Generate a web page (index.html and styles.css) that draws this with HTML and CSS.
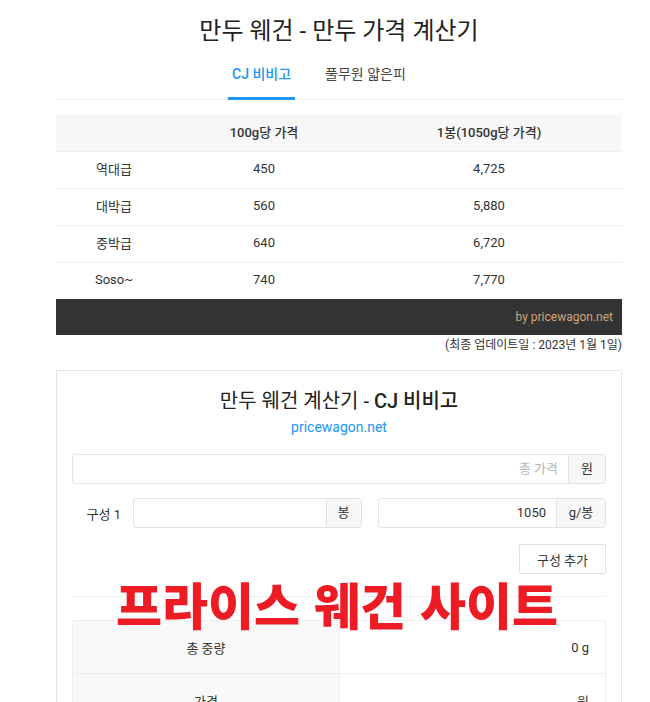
FILE: index.html
```html
<!DOCTYPE html>
<html lang="ko">
<head>
<meta charset="utf-8">
<title>만두 웨건 - 만두 가격 계산기</title>
<link rel="stylesheet" href="styles.css">
</head>
<body>
<div class="page">
  <h1 class="title">만두 웨건 - 만두 가격 계산기</h1>
  <nav class="tabs">
    <a class="tab active">CJ 비비고</a>
    <a class="tab">풀무원 얇은피</a>
  </nav>

  <table class="prices">
    <thead>
      <tr><th class="c1"></th><th class="c2">100g당 가격</th><th class="c3">1봉(1050g당 가격)</th></tr>
    </thead>
    <tbody>
      <tr><td class="c1">역대급</td><td>450</td><td>4,725</td></tr>
      <tr><td class="c1">대박급</td><td>560</td><td>5,880</td></tr>
      <tr><td class="c1">중박급</td><td>640</td><td>6,720</td></tr>
      <tr><td class="c1">Soso~</td><td>740</td><td>7,770</td></tr>
    </tbody>
  </table>
  <div class="credit">by pricewagon.net</div>
  <div class="updated">(최종 업데이트일 : 2023년 1월 1일)</div>

  <section class="card">
    <h2 class="card-title">만두 웨건 계산기 - <b>CJ 비비고</b></h2>
    <div class="card-link"><a>pricewagon.net</a></div>

    <div class="group full">
      <div class="field placeholder">총 가격</div>
      <div class="addon">원</div>
    </div>

    <div class="combo">
      <span class="combo-label">구성 1</span>
      <div class="group">
        <div class="field"></div>
        <div class="addon wide">봉</div>
      </div>
      <div class="group">
        <div class="field">1050</div>
        <div class="addon">g/봉</div>
      </div>
    </div>

    <div class="actions"><button class="btn">구성 추가</button></div>

    <hr class="sep">

    <table class="summary">
      <tr><th>총 중량</th><td>0 g</td></tr>
      <tr><th>가격</th><td>원</td></tr>
    </table>

    <div class="stamp">프라이스 웨건 사이트</div>
  </section>
</div>
</body>
</html>
```
FILE: styles.css
```css
html, body {
  margin: 0;
  padding: 0;
  background: #fff;
}
body {
  font-family: Roboto, "Noto Sans CJK KR", sans-serif;
  color: #333;
  font-size: 13px;
}
.page {
  width: 566px;
  margin-left: 56px;
}
.title {
  margin: 0;
  padding-top: 14px;
  height: 34px;
  font-size: 24px;
  font-weight: 400;
  line-height: 34px;
  text-align: center;
  color: #222;
}
.tabs {
  display: flex;
  padding-left: 172px;
  margin-top: 6px;
  border-bottom: 1px solid #eee;
}
.tab {
  display: block;
  padding: 0 4px;
  height: 46px;
  line-height: 40px;
  font-size: 14px;
  color: #444;
  margin-right: 26px;
  box-sizing: border-box;
  border-bottom: 3px solid transparent;
  margin-bottom: -1px;
}
.tab.active {
  color: #2196f3;
  border-bottom-color: #2196f3;
  font-weight: 500;
}
.prices {
  width: 100%;
  margin-top: 15px;
  border-collapse: collapse;
}
.prices th {
  background: #f7f7f7;
  font-weight: 500;
  height: 33px;
  padding: 0 0 3px;
  font-size: 13px;
}
.prices td {
  height: 33px;
  border-top: 1px solid #eee;
  text-align: center;
  padding: 0 0 3px;
}
.prices .c1 { width: 116px; }
.prices .c2 { width: 184px; }
.credit {
  background: #333;
  color: #cfa57c;
  height: 36px;
  line-height: 36px;
  text-align: right;
  padding-right: 9px;
  font-size: 12px;
}
.updated {
  text-align: right;
  font-size: 12px;
  line-height: 20px;
  margin-top: 0;
  color: #333;
}
.card {
  position: relative;
  margin-top: 15px;
  border: 1px solid #e6e6e6;
  padding: 0 15px 30px;
}
.card-title {
  margin: 0;
  padding-top: 16px;
  font-size: 20px;
  font-weight: 400;
  line-height: 28px;
  text-align: center;
  color: #222;
}
.card-title b { font-weight: 500; }
.card-link {
  text-align: center;
  font-size: 14px;
  line-height: 20px;
  margin-top: 2px;
}
.card-link a { color: #2196f3; }
.group {
  display: flex;
  height: 30px;
  border: 1px solid #e3e3e3;
  border-radius: 3px;
  box-sizing: border-box;
  flex: 1;
}
.group.full { margin-top: 17px; }
.field {
  flex: 1;
  text-align: right;
  line-height: 28px;
  padding-right: 10px;
  font-size: 13px;
  color: #333;
}
.field.placeholder { color: #b5b5b5; }
.addon {
  width: 48px;
  background: #f7f7f7;
  border-left: 1px solid #e3e3e3;
  text-align: center;
  line-height: 28px;
  font-size: 13px;
  color: #333;
}
.group.full .addon { width: 36px; }
.addon.wide { width: 34px; }
.combo {
  display: flex;
  align-items: center;
  margin-top: 14px;
  gap: 16px;
}
.combo-label {
  width: 49px;
  text-align: right;
  margin-right: -4px;
  font-size: 13px;
}
.actions {
  display: flex;
  justify-content: flex-end;
  margin-top: 16px;
}
.btn {
  font-family: inherit;
  font-size: 13px;
  color: #333;
  background: #fff;
  border: 1px solid #e0e0e0;
  border-radius: 2px;
  height: 30px;
  width: 87px;
  padding: 0;
}
.sep {
  border: 0;
  border-top: 1px solid #f0f0f0;
  margin: 22px 0 23px;
}
.summary {
  width: 100%;
  border-collapse: collapse;
}
.summary th, .summary td {
  border: 1px solid #eee;
  height: 52px;
  padding: 0 16px;
  font-size: 13px;
  font-weight: 400;
}
.summary th {
  background: #f9f9f9;
  width: 234px;
  text-align: center;
}
.summary td { text-align: right; }
.stamp {
  position: absolute;
  left: 59px;
  top: 202px;
  font-family: "Noto Sans CJK KR", sans-serif;
  font-weight: 900;
  font-size: 50px;
  line-height: 60px;
  color: #ed1c24;
  white-space: nowrap;
  letter-spacing: 0;
}
```
